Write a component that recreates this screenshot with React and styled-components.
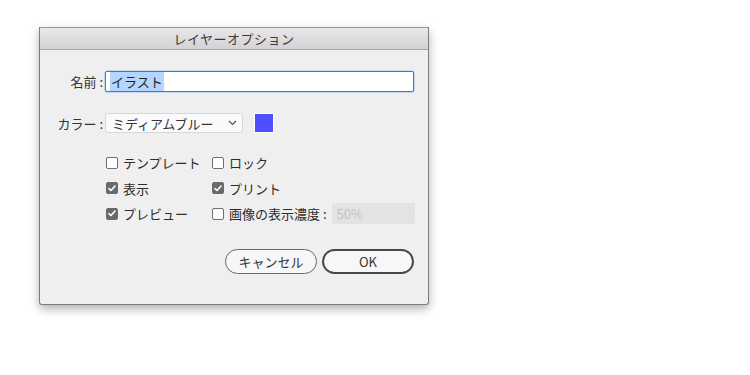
import styled, { createGlobalStyle } from "styled-components";

const Global = createGlobalStyle`
  html, body {
    margin: 0;
    background: #ffffff;
  }
  body {
    font-family: "Noto Sans CJK JP", "Noto Sans", sans-serif;
    font-size: 13px;
    color: #2b2b2b;
  }
`

const Page = styled.div`
  width: 750px;
  height: 375px;
  padding: 27px 0 0 39px;
  box-sizing: border-box;
`

const Dialog = styled.div`
  width: 390px;
  height: 278px;
  box-sizing: border-box;
  background: #efefef;
  border: 1px solid #7d7d7d;
  border-top-color: #9a9a9a;
  border-radius: 0 0 3px 3px;
  box-shadow: 0 4px 10px rgba(0, 0, 0, 0.3);
  display: flex;
  flex-direction: column;
`

const TitleBar = styled.div`
  height: 21px;
  flex-shrink: 0;
  background: linear-gradient(#e9e7e9, #d4d2d4);
  border-bottom: 1px solid #a8a8a8;
  display: flex;
  align-items: center;
  justify-content: center;
  font-size: 13px;
  color: #3a3a3a;
  letter-spacing: 0.5px;
`

const Body = styled.div`
  padding: 21px 14px 0 0;
  display: flex;
  flex-direction: column;
`

const Row = styled.div`
  display: flex;
  align-items: center;
  height: ${(p) => p.h || 21}px;
  margin-top: ${(p) => p.mt || 0}px;
`

const Label = styled.div`
  width: 65px;
  flex-shrink: 0;
  text-align: right;
  padding-right: 2px;
  box-sizing: border-box;
  color: #333;
  white-space: nowrap;
`

const TextInput = styled.div`
  flex: 1;
  height: 21px;
  box-sizing: border-box;
  border: 1px solid #3a7bd5;
  border-radius: 2px;
  background: #fff;
  box-shadow: 0 0 0 0.5px #9fc0ec;
  display: flex;
  align-items: center;
  padding-left: 4px;
`

const Selected = styled.span`
  background: #b4d5fe;
  color: #222;
  line-height: 19px;
  padding: 0 1px;
`

const Select = styled.div`
  width: 138px;
  height: 20px;
  box-sizing: border-box;
  border: 1px solid #d6d6d6;
  border-radius: 3px;
  background: #fafafa;
  display: flex;
  align-items: center;
  justify-content: space-between;
  padding: 0 5px 0 6px;
  color: #333;
`

const Swatch = styled.div`
  width: 20px;
  height: 20px;
  margin-left: 11px;
  box-sizing: border-box;
  border: 1px solid #fff;
  background: ${(p) => p.color};
`

const Checks = styled.div`
  margin-top: 17px;
  padding-left: 66px;
  display: grid;
  grid-template-columns: 106px 1fr;
  grid-auto-rows: 25.5px;
  align-items: center;
`

const CheckItem = styled.div`
  display: flex;
  align-items: center;
  gap: 5px;
  white-space: nowrap;
  color: #2b2b2b;
`

const Box = styled.span`
  width: 12px;
  height: 12px;
  box-sizing: border-box;
  border-radius: 2px;
  border: 1px solid ${(p) => (p.checked ? "#6a6a6a" : "#6f6f6f")};
  background: ${(p) => (p.checked ? "#6a6a6a" : "#fff")};
  display: flex;
  align-items: center;
  justify-content: center;
  flex-shrink: 0;
`

const Opacity = styled.div`
  width: 83px;
  height: 21px;
  box-sizing: border-box;
  background: #e3e3e3;
  border-radius: 2px;
  color: #c4c4c4;
  padding-left: 5px;
  display: flex;
  align-items: center;
`

const Buttons = styled.div`
  margin-top: 22px;
  display: flex;
  justify-content: flex-end;
  gap: 5px;
`

const Button = styled.div`
  width: ${(p) => p.w}px;
  height: 25px;
  box-sizing: border-box;
  border-radius: 13px;
  border: ${(p) => (p.primary ? "2px solid #474747" : "1px solid #6a6a6a")};
  background: #f7f7f7;
  display: flex;
  align-items: center;
  justify-content: center;
  color: #333;
  font-size: 13px;
`

function Check({ checked, children, extra }) {
  return (
    <CheckItem>
      <Box checked={checked}>
        {checked && (
          <svg width="8" height="7" viewBox="0 0 8 7">
            <path d="M1 3.6 L3 5.5 L7 1" fill="none" stroke="#fff" strokeWidth="1.6" strokeLinecap="round" strokeLinejoin="round" />
          </svg>
        )}
      </Box>
      {children}
      {extra}
    </CheckItem>
  )
}

export default function App() {
  return (
    <Page>
      <Global />
      <Dialog>
        <TitleBar>レイヤーオプション</TitleBar>
        <Body>
          <Row>
            <Label>名前 :</Label>
            <TextInput>
              <Selected>イラスト</Selected>
            </TextInput>
          </Row>
          <Row mt={21} h={20}>
            <Label>カラー :</Label>
            <Select>
              <span>ミディアムブルー</span>
              <svg width="9" height="6" viewBox="0 0 9 6">
                <path d="M1 1 L4.5 4.5 L8 1" fill="none" stroke="#555" strokeWidth="1.2" />
              </svg>
            </Select>
            <Swatch color="#4f4fff" />
          </Row>
          <Checks>
            <Check>テンプレート</Check>
            <Check>ロック</Check>
            <Check checked>表示</Check>
            <Check checked>プリント</Check>
            <Check checked>プレビュー</Check>
            <Check extra={<Opacity>50%</Opacity>}>画像の表示濃度 :</Check>
          </Checks>
          <Buttons>
            <Button w={92}>キャンセル</Button>
            <Button w={92} primary>OK</Button>
          </Buttons>
        </Body>
      </Dialog>
    </Page>
  )
}
